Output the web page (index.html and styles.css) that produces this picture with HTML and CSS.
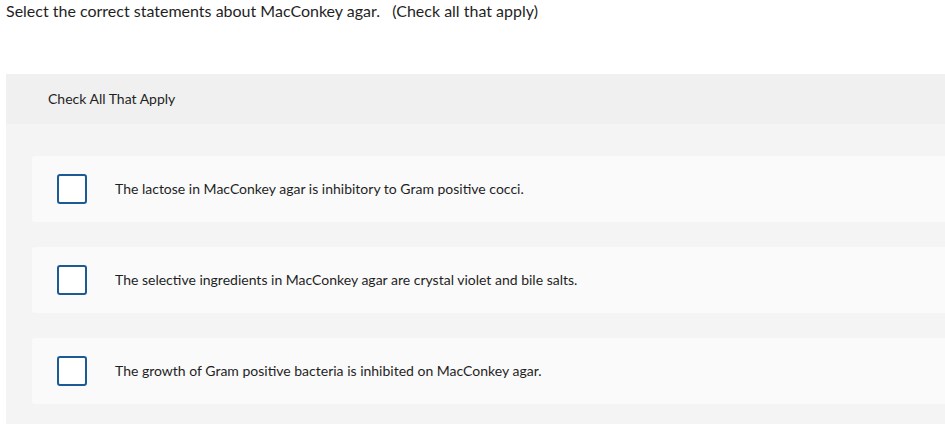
FILE: index.html
```html
<!DOCTYPE html>
<html>
<head>
<meta charset="utf-8">
<link rel="stylesheet" href="styles.css">
</head>
<body>
<p class="prompt">Select the correct statements about MacConkey agar.&nbsp;&nbsp; (Check all that apply)</p>
<div class="panel">
  <div class="panel-head">Check All That Apply</div>
  <div class="options">
    <label class="option"><span class="box"></span><span class="text">The lactose in MacConkey agar is inhibitory to Gram positive cocci.</span></label>
    <label class="option"><span class="box"></span><span class="text">The selective ingredients in MacConkey agar are crystal violet and bile salts.</span></label>
    <label class="option"><span class="box"></span><span class="text">The growth of Gram positive bacteria is inhibited on MacConkey agar.</span></label>
  </div>
</div>
</body>
</html>
```
FILE: styles.css
```css
html, body {
  margin: 0;
  padding: 0;
  background: #ffffff;
  font-family: "Lato", "Open Sans", sans-serif;
  color: #1f1f1f;
}
.prompt {
  margin: 0;
  padding: 1px 0 2px 6px;
  font-size: 16px;
  line-height: 20px;
}
.panel {
  margin: 51px 0 0 6px;
  background: #f4f4f4;
  padding-bottom: 40px;
}
.panel-head {
  background: #f0f0f0;
  height: 50px;
  box-sizing: border-box;
  padding: 0 0 2px 42px;
  display: flex;
  align-items: center;
  font-size: 14px;
}
.options {
  display: flex;
  flex-direction: column;
  gap: 25px;
  padding: 32px 0 0 26px;
}
.option {
  display: flex;
  align-items: center;
  height: 66px;
  background: #fafafa;
  border-radius: 3px 0 0 3px;
  padding-left: 25px;
  font-size: 14px;
}
.box {
  width: 26px;
  height: 26px;
  border: 2px solid #1b5a94;
  border-radius: 3px;
  background: #ffffff;
  flex: none;
}
.text {
  margin-left: 28px;
  padding-bottom: 2px;
}
```
